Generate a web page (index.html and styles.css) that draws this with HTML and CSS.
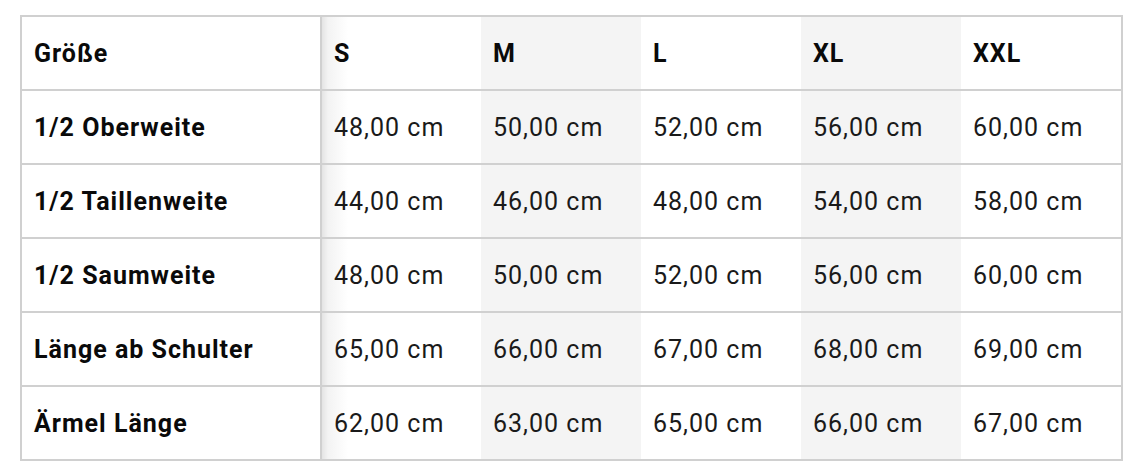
FILE: index.html
```html
<!DOCTYPE html>
<html lang="de">
<head>
<meta charset="utf-8">
<link rel="stylesheet" href="styles.css">
</head>
<body>
<table class="size-table">
  <colgroup>
    <col class="c-label">
    <col class="c-s">
    <col class="c-m">
    <col class="c-l">
    <col class="c-xl">
    <col class="c-xxl">
  </colgroup>
  <thead>
    <tr>
      <th class="label">Größe</th>
      <th class="first">S</th>
      <th class="alt">M</th>
      <th>L</th>
      <th class="alt">XL</th>
      <th>XXL</th>
    </tr>
  </thead>
  <tbody>
    <tr>
      <th class="label">1/2 Oberweite</th>
      <td class="first">48,00 cm</td>
      <td class="alt">50,00 cm</td>
      <td>52,00 cm</td>
      <td class="alt">56,00 cm</td>
      <td>60,00 cm</td>
    </tr>
    <tr>
      <th class="label">1/2 Taillenweite</th>
      <td class="first">44,00 cm</td>
      <td class="alt">46,00 cm</td>
      <td>48,00 cm</td>
      <td class="alt">54,00 cm</td>
      <td>58,00 cm</td>
    </tr>
    <tr>
      <th class="label">1/2 Saumweite</th>
      <td class="first">48,00 cm</td>
      <td class="alt">50,00 cm</td>
      <td>52,00 cm</td>
      <td class="alt">56,00 cm</td>
      <td>60,00 cm</td>
    </tr>
    <tr>
      <th class="label">Länge ab Schulter</th>
      <td class="first">65,00 cm</td>
      <td class="alt">66,00 cm</td>
      <td>67,00 cm</td>
      <td class="alt">68,00 cm</td>
      <td>69,00 cm</td>
    </tr>
    <tr>
      <th class="label">Ärmel Länge</th>
      <td class="first">62,00 cm</td>
      <td class="alt">63,00 cm</td>
      <td>65,00 cm</td>
      <td class="alt">66,00 cm</td>
      <td>67,00 cm</td>
    </tr>
  </tbody>
</table>
</body>
</html>
```
FILE: styles.css
```css
html, body {
  margin: 0;
  padding: 0;
  background: #ffffff;
}

body {
  padding: 15px 0 0 20px;
  font-family: Roboto, "Liberation Sans", sans-serif;
  color: #111111;
}

.size-table {
  border-collapse: collapse;
  table-layout: fixed;
  width: 1103px;
  border: 2px solid #d0d0d0;
}

.c-label { width: 300px; }
.c-s, .c-m, .c-l, .c-xl { width: 160px; }
.c-xxl { width: 161px; }

.size-table th,
.size-table td {
  height: 74px;
  padding: 2px 0 0 12px;
  text-align: left;
  vertical-align: middle;
  font-size: 25px;
  letter-spacing: 1px;
  line-height: 28px;
  border-top: 2px solid #d0d0d0;
  border-bottom: 2px solid #d0d0d0;
  box-sizing: border-box;
  white-space: nowrap;
}

.size-table th {
  font-weight: 700;
  color: #0a0a0a;
}

.size-table td {
  font-weight: 400;
  color: #1a1a1a;
}

.size-table .label {
  border-right: 2px solid #d0d0d0;
  padding-left: 12px;
}

.size-table .first {
  background: linear-gradient(to right, #e4e4e4 0px, #f3f3f3 6px, #ffffff 26px);
}

.size-table .alt {
  background: #f4f4f4;
}
```
